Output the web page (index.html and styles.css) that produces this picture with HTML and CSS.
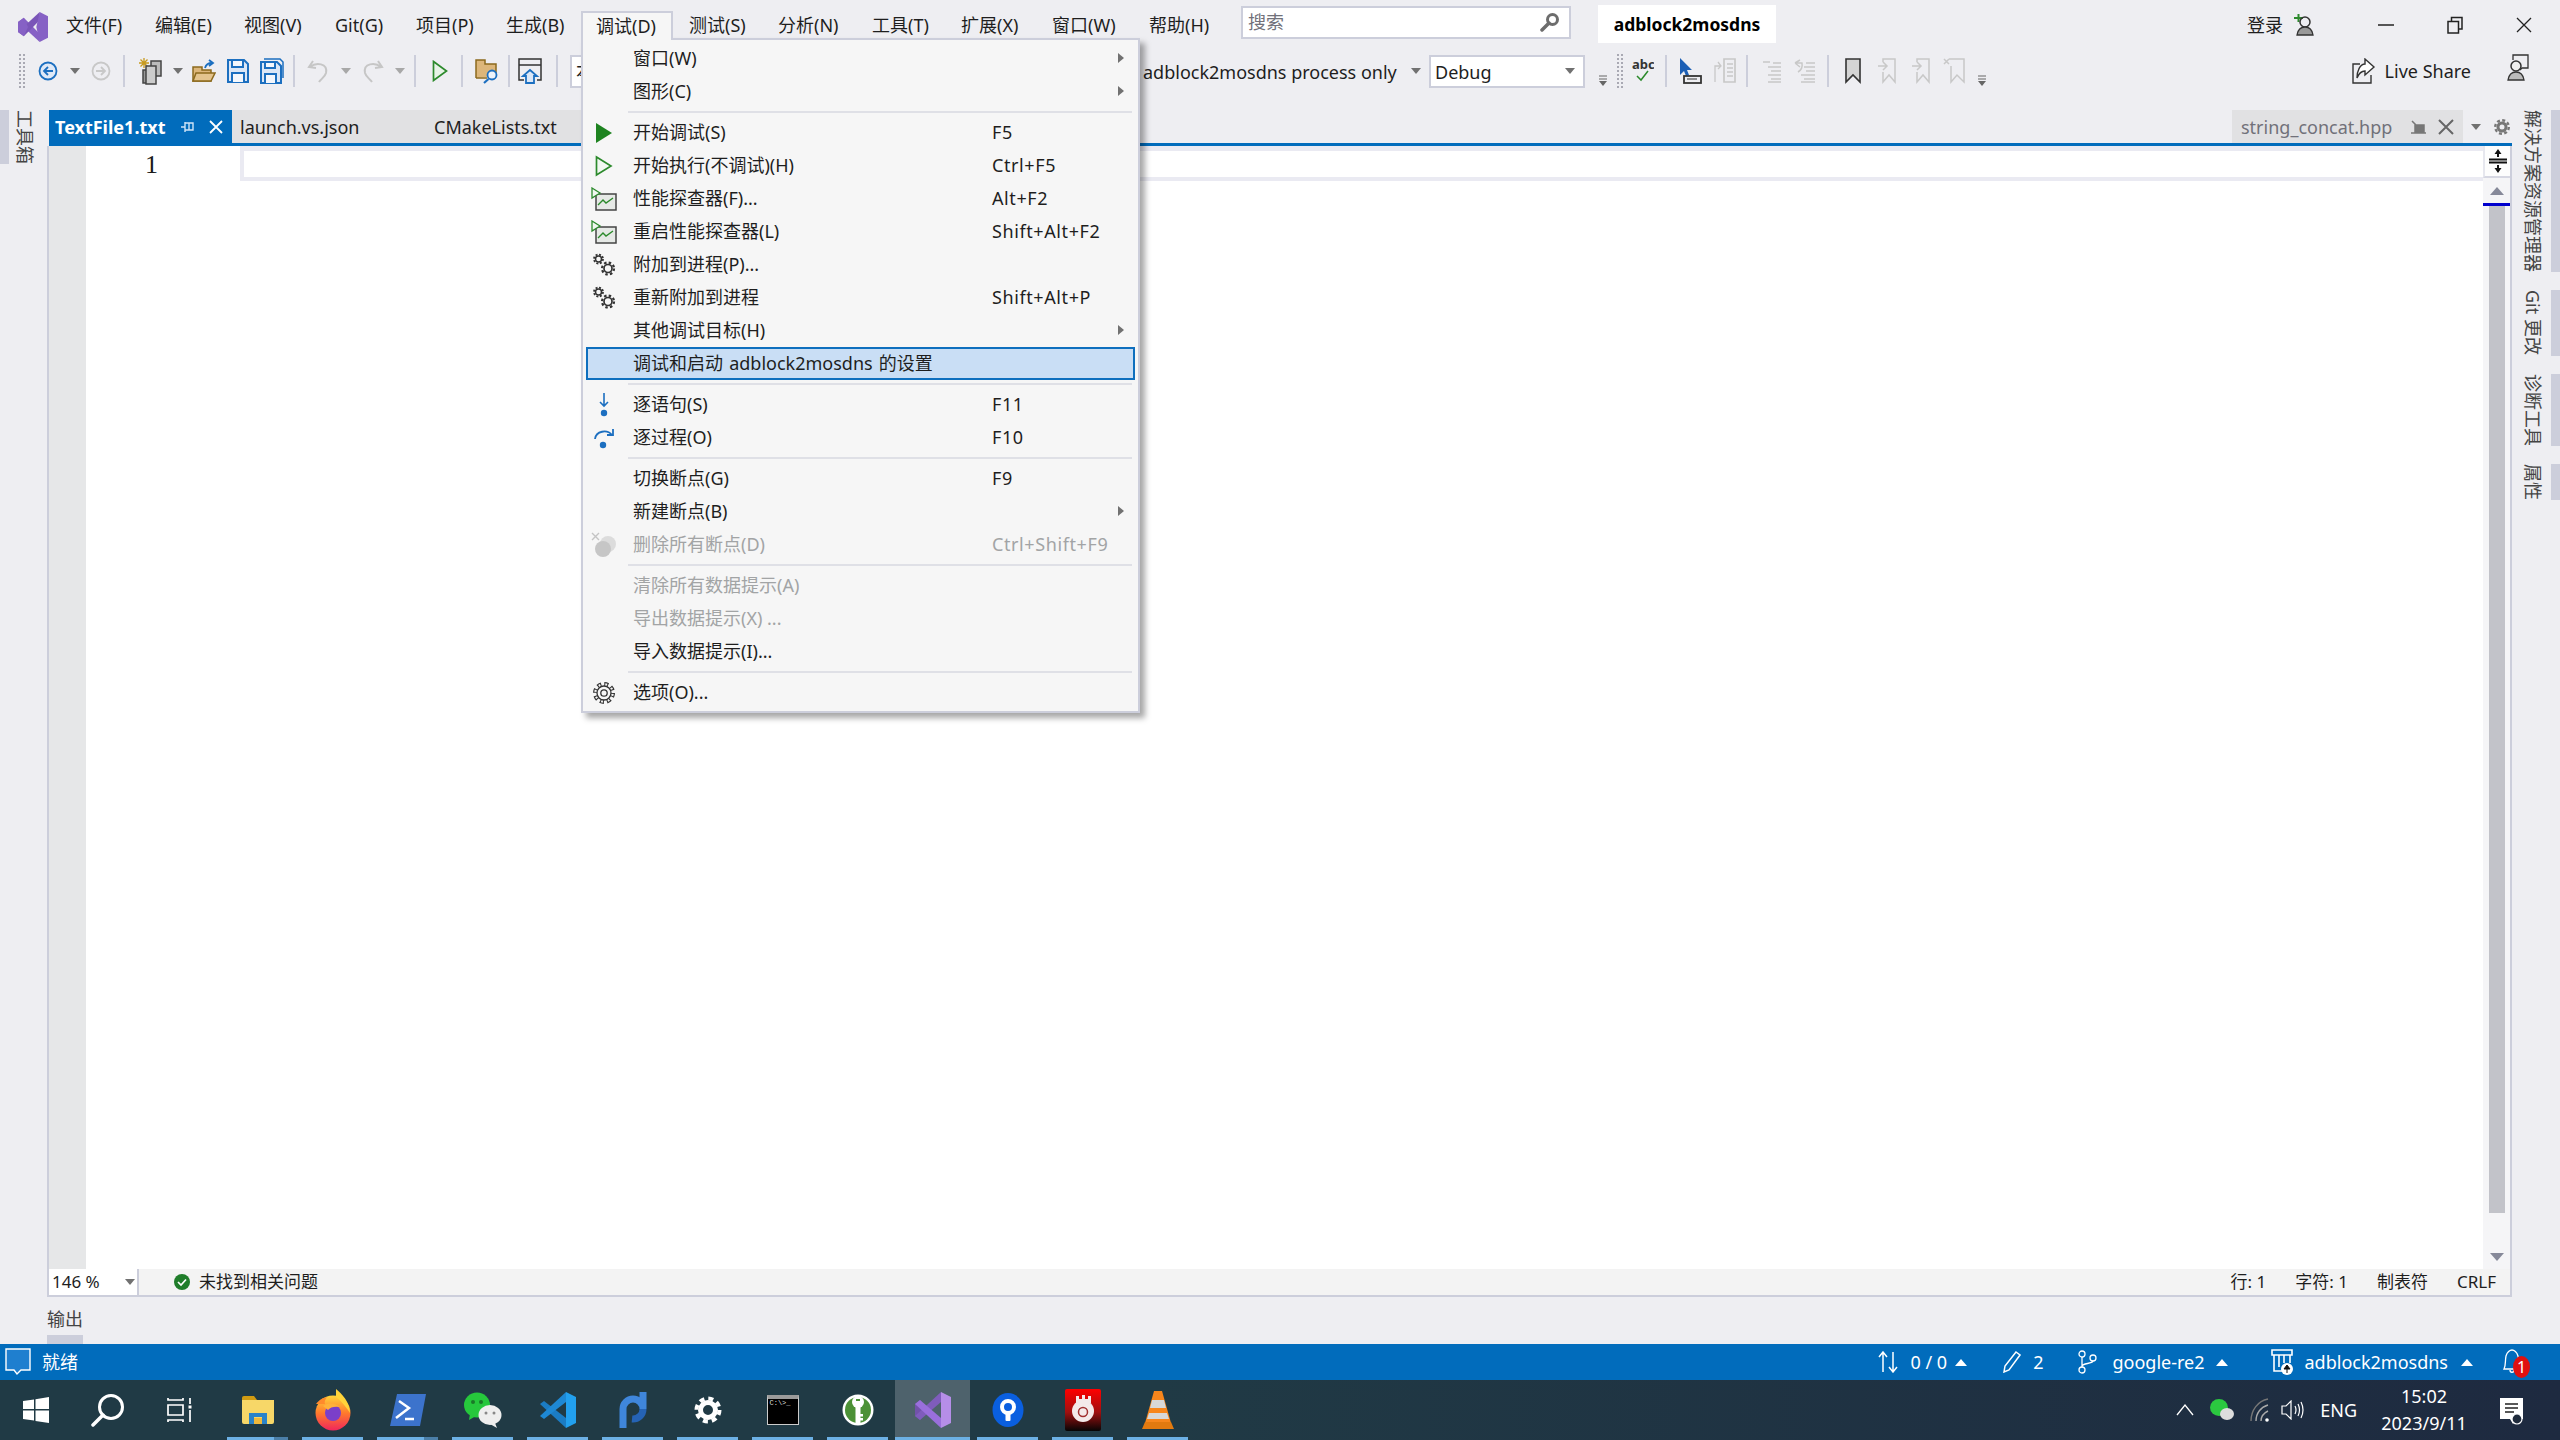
FILE: index.html
```html
<!DOCTYPE html>
<html lang="zh-CN">
<head>
<meta charset="utf-8">
<title>adblock2mosdns</title>
<link rel="stylesheet" href="styles.css">
</head>
<body>
<div class="app">
  <header class="titlebar">
    <svg class="logo" width="30" height="30" viewBox="0 0 36 36"><path d="M0 12 7 7 26 26V36Z" fill="#8661c5"/><path d="M0 24 7 29 26 10V0Z" fill="#7a55b8"/><path d="M0 12 7 7 12 18 7 29 0 24Z" fill="#8661c5"/><path d="M26 0 36 5V31L26 36 22 18Z" fill="#8661c5"/></svg>
    <nav class="menubar">
      <span class="mi mi-a">文件(F)</span><span class="mi mi-b">编辑(E)</span><span class="mi mi-c">视图(V)</span><span class="mi mi-d">Git(G)</span><span class="mi mi-e">项目(P)</span><span class="mi mi-f">生成(B)</span><span class="mi mi-open"></span><span class="mi mi-g">测试(S)</span><span class="mi mi-h">分析(N)</span><span class="mi mi-i">工具(T)</span><span class="mi mi-j">扩展(X)</span><span class="mi mi-k">窗口(W)</span><span class="mi mi-l">帮助(H)</span>
    </nav>
    <div class="search"><span>搜索</span>
      <svg width="20" height="20" viewBox="0 0 20 20"><circle cx="12.500" cy="7.500" r="5" fill="none" stroke="#6d6d6d" stroke-width="3"/><path d="M9 11 2 18" stroke="#6d6d6d" stroke-width="3.500" stroke-linecap="round"/></svg>
    </div>
    <div class="project">adblock2mosdns</div>
    <div class="account">
      <span class="login">登录</span>
      <svg width="20" height="24" viewBox="0 0 20 24"><path d="M0 5H9M4.500 1V9" stroke="#2d8a2d" stroke-width="2"/><circle cx="11" cy="9" r="5" fill="none" stroke="#333" stroke-width="1.500"/><path d="M3 22C4 16 7 14 11 14S18 16 19 22Z" fill="#999" stroke="#333" stroke-width="1.300"/></svg>
    </div>
    <div class="winbtns">
      <svg width="16" height="16" viewBox="0 0 16 16"><path d="M0 8H16" stroke="#222" stroke-width="1.500"/></svg>
      <svg width="16" height="18" viewBox="0 0 16 18"><path d="M1 5.500H11.500V17H1ZM4.500 5V1.500H15V13H12" fill="none" stroke="#222" stroke-width="1.500"/></svg>
      <svg width="16" height="16" viewBox="0 0 16 16"><path d="M1 1 15 15M15 1 1 15" stroke="#222" stroke-width="1.300"/></svg>
    </div>
  </header>

  <div class="toolbar">
    <div class="tb-left">
      <i class="grip"></i>
      <svg width="20" height="20" viewBox="0 0 20 20"><circle cx="10" cy="10" r="8.500" fill="#dfe9f7" stroke="#1c6fc0" stroke-width="1.800"/><path d="M15 10H6M10 6 6 10 10 14" fill="none" stroke="#1c6fc0" stroke-width="1.800"/></svg>
      <i class="drop"></i>
      <svg width="20" height="20" viewBox="0 0 20 20"><circle cx="10" cy="10" r="8.500" fill="none" stroke="#c8c8c8" stroke-width="1.800"/><path d="M5 10H14M10 6 14 10 10 14" fill="none" stroke="#c8c8c8" stroke-width="1.800"/></svg>
      <i class="sep"></i>
      <svg width="24" height="28" viewBox="0 0 24 28"><path d="M1 6H11M6 1V11M2.500 2.500 9.500 9.500M9.500 2.500 2.500 9.500" stroke="#c79a1e" stroke-width="1.300"/><rect x="13" y="4" width="10" height="15" fill="#bbb" stroke="#444" stroke-width="1.500"/><rect x="5" y="13" width="4" height="13" fill="#999" stroke="#444" stroke-width="1.500"/><rect x="8" y="9" width="10" height="18" fill="#ccc" stroke="#444" stroke-width="1.500"/></svg>
      <i class="drop"></i>
      <svg width="24" height="24" viewBox="0 0 24 24"><path d="M1 22V8H10V11H19V22Z" fill="#dcb67a" stroke="#8c6a1e" stroke-width="1.500"/><path d="M1 22 4 14H23L19 22Z" fill="#e4c48e" stroke="#8c6a1e" stroke-width="1.500"/><path d="M13 9C14 5 16 4 20 4M17 1 21 4 17 7" fill="none" stroke="#1c6fc0" stroke-width="1.800"/></svg>
      <svg width="22" height="24" viewBox="0 0 22 24"><path d="M1 1H17L21 5V23H1Z" fill="#dce7f6" stroke="#1c6fc0" stroke-width="2"/><path d="M5 1H16V8H5ZM5 23V14H17V23" fill="#f4f7fc" stroke="#1c6fc0" stroke-width="2"/></svg>
      <svg width="24" height="26" viewBox="0 0 24 26"><path d="M4 1H20L23 4V20" fill="none" stroke="#1c6fc0" stroke-width="1.500"/><path d="M1 4H17L21 8V25H1Z" fill="#dce7f6" stroke="#1c6fc0" stroke-width="2"/><path d="M5 4H15V10H5ZM5 25V16H16V25" fill="#f4f7fc" stroke="#1c6fc0" stroke-width="2"/></svg>
      <i class="sep"></i>
      <svg width="22" height="24" viewBox="0 0 22 24"><path d="M6 2 2 8 9 9M3 8C9 3 21 4 19 14 18 18 14 20 12 23" fill="none" stroke="#c6c6c6" stroke-width="2"/></svg>
      <i class="drop light"></i>
      <svg width="22" height="24" viewBox="0 0 22 24"><path d="M16 2 20 8 13 9M19 8C13 3 1 4 3 14 4 18 8 20 10 23" fill="none" stroke="#c6c6c6" stroke-width="2"/></svg>
      <i class="drop light"></i>
      <i class="sep"></i>
      <svg width="16" height="22" viewBox="0 0 16 22"><path d="M1.500 1.500 14.500 11 1.500 20.500Z" fill="#e7f3e7" stroke="#2c8a2c" stroke-width="1.700"/></svg>
      <i class="sep"></i>
      <svg width="24" height="26" viewBox="0 0 24 26"><path d="M1 20V2H10V6H21V18" fill="#dcb67a" stroke="#8c6a1e" stroke-width="1.500"/><path d="M1 20H12" stroke="#8c6a1e" stroke-width="1.500"/><circle cx="17" cy="17" r="4.500" fill="#eef4fb" stroke="#1c6fc0" stroke-width="1.800"/><path d="M13.500 21 9 25" stroke="#1c6fc0" stroke-width="2.200"/></svg>
      <i class="sep"></i>
      <svg width="24" height="26" viewBox="0 0 24 26"><path d="M6 22H1V1H23V22H19M1 7H23" fill="none" stroke="#333" stroke-width="1.500"/><path d="M12 12 5 18H8V25H16V18H19Z" fill="#dce7f6" stroke="#1c6fc0" stroke-width="1.800"/></svg>
      <i class="sep"></i>
      <div class="combo hidden-combo">本地</div>
    </div>
    <div class="tb-right">
      <span class="target">adblock2mosdns process only</span>
      <i class="drop"></i>
      <div class="combo debug"><span>Debug</span><i class="drop"></i></div>
      <svg class="overflow" width="10" height="12" viewBox="0 0 10 12"><path d="M1 1H9M1 4H9" stroke="#666"/><path d="M1 6H9L5 11Z" fill="#666"/></svg>
      <i class="grip"></i>
      <svg width="22" height="26" viewBox="0 0 22 26" class="abc"><text x="0" y="11">abc</text><path d="M5 18 9 22 16 13" fill="none" stroke="#2c8a2c" stroke-width="1.500"/></svg>
      <i class="sep"></i>
      <svg width="24" height="28" viewBox="0 0 24 28"><path d="M2 1V18L6 14 8 19 11 18 9 13H14Z" fill="#1c5fb5"/><rect x="6" y="19" width="17" height="7" fill="none" stroke="#333" stroke-width="1.800"/><path d="M9 22H19" stroke="#333"/></svg>
      <svg width="22" height="26" viewBox="0 0 22 26"><path d="M1 24V8H7M4 4 7 8 4 11" fill="none" stroke="#c8c8c8" stroke-width="1.300"/><path d="M10 1H21V24H10ZM13 6H19M13 10H19M13 14H19M13 18H19" fill="none" stroke="#c8c8c8" stroke-width="1.700"/></svg>
      <i class="sep"></i>
      <svg width="20" height="24" viewBox="0 0 20 24"><path d="M1 3H8M6 8H19M9 12H19M6 16H19M9 20H19M6 23H19M11 4H19" stroke="#c8c8c8" stroke-width="1.500"/></svg>
      <svg width="22" height="24" viewBox="0 0 22 24"><path d="M1 4 6 1M1 4 6 8M1 4H8Q9 10 4 13M12 4H21M10 8H21M12 12H21M7 16H21M10 20H21M7 23H21" fill="none" stroke="#c8c8c8" stroke-width="1.500"/></svg>
      <i class="sep"></i>
      <svg width="16" height="26" viewBox="0 0 16 26"><path d="M1 1H15V24L8 17 1 24Z" fill="#d4d4d4" stroke="#333" stroke-width="1.600"/></svg>
      <svg width="18" height="26" viewBox="0 0 18 26"><path d="M5 4V1H17V24L11 17 5 24V14M0 8H9M5 4 9 8 5 12" fill="none" stroke="#c8c8c8" stroke-width="1.500"/></svg>
      <svg width="18" height="26" viewBox="0 0 18 26"><path d="M5 4V1H17V24L11 17 5 24V14M0 8H9M5 4 9 8 5 12" fill="none" stroke="#c8c8c8" stroke-width="1.500"/></svg>
      <svg width="22" height="26" viewBox="0 0 22 26"><path d="M6 1H21V24L14 17 8 24V8M1 1 6 6M6 1 1 6" fill="none" stroke="#c8c8c8" stroke-width="1.500"/></svg>
      <svg class="overflow" width="10" height="12" viewBox="0 0 10 12"><path d="M1 1H9M1 4H9" stroke="#666"/><path d="M1 6H9L5 11Z" fill="#666"/></svg>
    </div>
    <div class="live">
      <svg width="24" height="26" viewBox="0 0 24 26"><path d="M8 6H1V25H19V17" fill="none" stroke="#333" stroke-width="1.400"/><path d="M13 1 22 9 13 17V13C9 13 7 15 5 20 5 13 8 6 13 6Z" fill="#fff" stroke="#333" stroke-width="1.400"/></svg>
      <span>Live Share</span>
      <svg class="live-user" width="22" height="28" viewBox="0 0 22 28"><path d="M6 6V1H21V14H15L13 16" fill="none" stroke="#333" stroke-width="1.300"/><circle cx="9" cy="12" r="5" fill="#eee" stroke="#333" stroke-width="1.500"/><path d="M1 26C2 20 5 18 9 18S16 20 17 26Z" fill="#bbb" stroke="#333" stroke-width="1.300"/></svg>
    </div>
  </div>

  <main class="workspace">
    <aside class="rail rail-left">
      <div class="rail-item"><i class="rail-strip"></i><span class="vtext">工具箱</span></div>
    </aside>
    <section class="doc">
      <div class="tabs">
        <div class="tab tab-active"><span>TextFile1.txt</span>
          <svg width="14" height="14" viewBox="0 0 14 14"><path d="M0 7H4M4 2V12M4 3H12V10H4M8 3V10" fill="none" stroke="#cfe4f7" stroke-width="1.400"/></svg>
          <svg width="14" height="14" viewBox="0 0 14 14"><path d="M1 1 13 13M13 1 1 13" stroke="#fff" stroke-width="1.800"/></svg>
        </div>
        <div class="tab tab-b">launch.vs.json</div>
        <div class="tab tab-c">CMakeLists.txt</div>
        <div class="tab-right">
          <span>string_concat.hpp</span>
          <svg width="16" height="14" viewBox="0 0 16 14"><path d="M0 13H15M4 5H13V12H4ZM1 1 6 6" fill="#777" stroke="#777" stroke-width="1.500"/></svg>
          <svg width="16" height="16" viewBox="0 0 16 16"><path d="M1 1 15 15M15 1 1 15" stroke="#666" stroke-width="2"/></svg>
        </div>
        <i class="drop tab-drop"></i>
        <svg class="tab-gear" width="16" height="16" viewBox="0 0 16 16"><circle cx="8" cy="8" r="4" fill="none" stroke="#777" stroke-width="3"/><circle cx="8" cy="8" r="6.800" fill="none" stroke="#777" stroke-width="2.400" stroke-dasharray="3 2.340"/></svg>
      </div>
      <div class="tabline"></div>
      <div class="editor">
        <div class="gutter"></div>
        <div class="code">
          <div class="codeline"><span class="lineno">1</span><div class="curline"></div></div>
        </div>
        <div class="vscroll">
          <div class="splitter"><svg width="20" height="24" viewBox="0 0 20 24"><path d="M1 10.500H19M1 13.500H19" stroke="#111" stroke-width="2"/><path d="M10 8V2M10 16V22" stroke="#111" stroke-width="2"/><path d="M6.500 5 10 0 13.500 5ZM6.500 19 10 24 13.500 19Z" fill="#111"/></svg></div>
          <div class="sb-up"><i class="tri-up"></i></div>
          <div class="sb-mark"></div>
          <div class="sb-track"><div class="sb-thumb"></div></div>
          <div class="sb-down"><i class="tri-down"></i></div>
        </div>
      </div>
      <div class="edstatus">
        <div class="zoomfield"><span>146 %</span><i class="drop"></i></div>
        <svg class="okicon" width="16" height="16" viewBox="0 0 16 16"><circle cx="8" cy="8" r="8" fill="#1f7d2a"/><path d="M4 8 7 11 12 5.500" fill="none" stroke="#fff" stroke-width="1.700"/></svg>
        <span class="noissue">未找到相关问题</span>
        <div class="edpos"><span>行: 1</span><span>字符: 1</span><span>制表符</span><span>CRLF</span></div>
      </div>
    </section>
    <aside class="rail rail-right">
      <div class="rail-item r1"><span class="vtext">解决方案资源管理器</span><i class="rail-strip"></i></div>
      <div class="rail-item r2"><span class="vtext">Git 更改</span><i class="rail-strip"></i></div>
      <div class="rail-item r3"><span class="vtext">诊断工具</span><i class="rail-strip"></i></div>
      <div class="rail-item r4"><span class="vtext">属性</span><i class="rail-strip"></i></div>
    </aside>
  </main>

  <div class="outputrow"><div class="outtab"><span>输出</span><i></i></div></div>

  <footer class="statusbar">
    <svg class="st-chat" width="26" height="28" viewBox="0 0 26 28"><path d="M1 1H25V22H16L12 26 9 22H1Z" fill="#1f7fcf" stroke="#fff" stroke-width="1.400"/></svg>
    <span class="st-ready">就绪</span>
    <div class="st-right">
      <svg width="20" height="22" viewBox="0 0 20 22"><path d="M5 21V2M1 6 5 1 9 6M15 1V20M11 16 15 21 19 16" fill="none" stroke="#fff" stroke-width="1.500"/></svg>
      <span class="st-count">0 / 0</span><i class="caret c1"></i>
      <svg class="st-pen" width="18" height="22" viewBox="0 0 18 22"><path d="M13 1 17 4 6 19 1 21 2 15Z" fill="none" stroke="#fff" stroke-width="1.500"/></svg>
      <span class="st-two">2</span>
      <svg class="st-branch" width="20" height="24" viewBox="0 0 20 24"><circle cx="5" cy="4" r="3" fill="none" stroke="#fff" stroke-width="1.300"/><circle cx="5" cy="20" r="3" fill="none" stroke="#fff" stroke-width="1.300"/><circle cx="16" cy="8" r="3" fill="none" stroke="#fff" stroke-width="1.300"/><path d="M5 7V17M5 16C6 13 15 14 16 11" fill="none" stroke="#fff" stroke-width="1.300"/></svg>
      <span class="st-branchname">google-re2</span><i class="caret c2"></i>
      <svg class="st-repo" width="22" height="26" viewBox="0 0 22 26"><path d="M1 1H21V6H1ZM3 6V22H11M19 6V14M8 6V18M13 6V14" fill="none" stroke="#fff" stroke-width="1.600"/><circle cx="16" cy="20" r="6" fill="#fff"/><path d="M16 24V18M13 20 16 16 19 20Z" fill="#111" stroke="#111"/></svg>
      <span class="st-proj">adblock2mosdns</span><i class="caret c3"></i>
      <div class="st-bell">
        <svg width="20" height="26" viewBox="0 0 20 26"><path d="M2 20C4 16 3 12 4 7 5 3 8 1 10 1S15 3 16 7 16 16 18 20ZM8 21C8 24 12 24 12 21" fill="none" stroke="#fff" stroke-width="1.300"/></svg>
        <span class="badge">1</span>
      </div>
    </div>
  </footer>

  <div class="taskbar">
    <div class="tb-app tb-start"><svg width="26" height="26" viewBox="0 0 26 26"><path d="M0 4 11 2.500V12H0ZM12.500 2.300 26 0V12H12.500ZM0 13.500H11V23.500L0 22ZM12.500 13.500H26V26L12.500 24Z" fill="#fff"/></svg></div>
    <div class="tb-app tb-start"><svg width="34" height="34" viewBox="0 0 34 34"><circle cx="20" cy="14" r="11.500" fill="none" stroke="#fff" stroke-width="3"/><path d="M12 22 2 32" stroke="#fff" stroke-width="3.500" stroke-linecap="round"/></svg></div>
    <div class="tb-app tb-start tb-view"><svg width="26" height="26" viewBox="0 0 26 26"><path d="M1 1V3H16V1M1 8H16V18H1ZM1 25V23H16V25" fill="none" stroke="#fff" stroke-width="1.700"/><path d="M23 1V7M23 13V25" stroke="#fff" stroke-width="1.700"/><rect x="21.500" y="8.500" width="3" height="3" fill="#fff"/></svg></div>

    <div class="tb-app run multi"><svg width="32" height="28" viewBox="0 0 32 28"><path d="M0 2Q0 0 2 0H12L15 4H0Z" fill="#d09b12"/><path d="M0 4H32V26Q32 28 30 28H2Q0 28 0 26Z" fill="#f7d768"/><path d="M7 28V17H25V28H20V21H12V28Z" fill="#2a83c9"/><rect x="12" y="22" width="8" height="6" fill="#f0b93c"/></svg></div>
    <div class="tb-app run"><svg width="36" height="42" viewBox="0 0 36 42"><defs><linearGradient id="ffg" x1="0" y1="0" x2="0" y2="1"><stop offset="0" stop-color="#ffd43a"/><stop offset=".5" stop-color="#ff7a2c"/><stop offset="1" stop-color="#f0265c"/></linearGradient></defs><circle cx="18" cy="24" r="17.500" fill="url(#ffg)"/><path d="M21 0C27 5 35 13 35 24 30 16 24 10 21 8Z" fill="#ffd43a"/><path d="M1 15C5 10 8 9 12 8 10 11 9 13 10 15Z" fill="#ff8a2c"/><circle cx="18" cy="24" r="8" fill="#7b3fc9"/><path d="M8 17C13 13 20 14 25 18 20 17 15 18 13 21Z" fill="#ffb13a"/></svg></div>
    <div class="tb-app run multi"><svg width="36" height="32" viewBox="0 0 36 32"><path d="M7 0H36L30 32H0Z" fill="#3c73cc"/><path d="M9 7 19 14 6 24M15 25H24" fill="none" stroke="#fff" stroke-width="2.500"/></svg></div>
    <div class="tb-app run"><svg width="38" height="36" viewBox="0 0 38 36"><ellipse cx="13" cy="13" rx="13" ry="12.500" fill="#26c83c"/><path d="M6 22 5 28 12 24Z" fill="#26c83c"/><circle cx="9" cy="10" r="2" fill="#1a7a28"/><circle cx="17" cy="10" r="2" fill="#1a7a28"/><ellipse cx="26" cy="23" rx="11.500" ry="10" fill="#eee"/><path d="M31 31 33 36 26 32Z" fill="#eee"/><circle cx="22" cy="21" r="1.500" fill="#888"/><circle cx="30" cy="21" r="1.500" fill="#888"/></svg></div>
    <div class="tb-app run"><svg width="36" height="36" viewBox="0 0 36 36"><path d="M0 12 4 9 26 26V36Z" fill="#1b7cc4"/><path d="M0 24 4 27 26 10V0Z" fill="#1e88d4"/><path d="M26 0 36 5V31L26 36Z" fill="#22a0ee"/></svg></div>
    <div class="tb-app run"><svg width="28" height="36" viewBox="0 0 28 36"><path d="M4 36V17A10 10 0 0 1 24 17V0" fill="none" stroke="#3f86db" stroke-width="7"/><path d="M24 17A10 10 0 0 1 13 27" fill="none" stroke="#2563b5" stroke-width="7"/></svg></div>
    <div class="tb-app run"><svg width="28" height="28" viewBox="0 0 28 28"><circle cx="14" cy="14" r="7.500" fill="none" stroke="#fff" stroke-width="5"/><circle cx="14" cy="14" r="11.500" fill="none" stroke="#fff" stroke-width="4" stroke-dasharray="5 4.030"/></svg></div>
    <div class="tb-app run"><div class="cmdicon"><span>C:\&gt;_</span></div></div>
    <div class="tb-app run"><svg width="32" height="32" viewBox="0 0 32 32"><circle cx="16" cy="16" r="15.500" fill="#fff"/><circle cx="16" cy="16" r="13" fill="#4c9136"/><circle cx="16" cy="8" r="6" fill="#fff"/><rect x="13.500" y="11" width="5" height="19" fill="#fff"/><rect x="18" y="20" width="3" height="2.500" fill="#fff"/><rect x="18" y="24" width="3" height="2.500" fill="#fff"/><rect x="14" y="5" width="4" height="2" fill="#4c9136"/></svg></div>
    <div class="tb-app run active"><svg width="36" height="36" viewBox="0 0 36 36"><path d="M0 12 5 8 12 18 5 28 0 24Z" fill="#7252aa"/><path d="M0 24 5 28 26 10V0Z" fill="#7f5cbc"/><path d="M5 8 26 26V36L0 12Z" fill="#9a6fdc"/><path d="M26 0 36 5V31L26 36Z" fill="#b68ee8"/></svg></div>
    <div class="tb-app run"><svg width="32" height="34" viewBox="0 0 32 34"><ellipse cx="16" cy="17" rx="15.500" ry="17" fill="#0a5fe0"/><circle cx="16" cy="14" r="6" fill="none" stroke="#fff" stroke-width="4"/><rect x="13.500" y="18" width="5" height="10" rx="1" fill="#fff"/></svg></div>
    <div class="tb-app run"><svg width="36" height="42" viewBox="0 0 36 42"><defs><linearGradient id="redg" x1="0" y1="0" x2="0" y2="1"><stop offset="0" stop-color="#f00"/><stop offset=".55" stop-color="#a01010"/><stop offset="1" stop-color="#050505"/></linearGradient></defs><rect width="36" height="42" rx="2" fill="url(#redg)"/><circle cx="18" cy="22" r="11" fill="#f4eaea"/><path d="M11 14V7H14V10H17V6H20V10H23V7H26V14Z" fill="#f4eaea"/><circle cx="18" cy="23" r="4.500" fill="none" stroke="#a03030" stroke-width="1.500"/></svg></div>
    <div class="tb-app run"><svg width="32" height="38" viewBox="0 0 32 38"><path d="M12 0H20L29 32H3Z" fill="#f7861c"/><path d="M10 9H22L24 17H8ZM7 22H25L27 28H5Z" fill="#d8d8d8"/><path d="M0 38 3 31H29L32 38Z" fill="#e27a10"/></svg></div>

    <div class="tray">
      <svg width="18" height="12" viewBox="0 0 18 12"><path d="M1 11 9 1 17 11" fill="none" stroke="#fff" stroke-width="1.300"/></svg>
      <svg class="tr-wechat" width="24" height="22" viewBox="0 0 24 22"><ellipse cx="9" cy="8.500" rx="9" ry="8.500" fill="#2bc840"/><ellipse cx="17" cy="15" rx="7" ry="6" fill="#ddd"/></svg>
      <svg class="tr-wifi" width="20" height="24" viewBox="0 0 20 24"><path d="M1 23C1 12 8 3 18 1" fill="none" stroke="#777" stroke-width="1.400"/><path d="M6 23C6 15 11 9 18 7M11 23C11 18 14 15 18 13" fill="none" stroke="#aaa" stroke-width="1.400"/><circle cx="17" cy="22" r="1.800" fill="#fff"/></svg>
      <svg class="tr-vol" width="24" height="20" viewBox="0 0 24 20"><path d="M1 6H5L10 1V19L5 14H1Z" fill="none" stroke="#fff" stroke-width="1.200"/><path d="M14 6Q16 10 14 14M17 4Q20 10 17 16M20 2Q24 10 20 18" fill="none" stroke="#fff" stroke-width="1.200"/></svg>
      <span class="tr-eng">ENG</span>
      <div class="clock"><span>15:02</span><span>2023/9/11</span></div>
      <svg class="tr-note" width="26" height="30" viewBox="0 0 26 30"><path d="M1 1H24V22H18L14 27 11 22H1Z" fill="#fff"/><path d="M6 7H19M6 11H19M6 15H15" stroke="#222" stroke-width="1.300"/><circle cx="18" cy="22" r="5" fill="#1f2b3c" stroke="#fff" stroke-width="1.200"/></svg>
    </div>
  </div>

  <div class="dbg-head">调试(D)</div>
  <div class="menu">
    <div class="row"><span class="ic"></span><span class="lb">窗口(W)</span><i class="sub"></i></div>
    <div class="row"><span class="ic"></span><span class="lb">图形(C)</span><i class="sub"></i></div>
    <div class="msep"></div>
    <div class="row"><span class="ic"><svg width="18" height="22" viewBox="0 0 18 22"><path d="M1 1 17 11 1 21Z" fill="#1e8320"/></svg></span><span class="lb">开始调试(S)</span><span class="sc">F5</span></div>
    <div class="row"><span class="ic"><svg width="18" height="22" viewBox="0 0 18 22"><path d="M1.500 2 16 11 1.500 20Z" fill="#f1f8f1" stroke="#2c8a2c" stroke-width="1.700"/></svg></span><span class="lb">开始执行(不调试)(H)</span><span class="sc">Ctrl+F5</span></div>
    <div class="row"><span class="ic"><svg width="26" height="24" viewBox="0 0 26 24"><rect x="5" y="7" width="20" height="16" fill="#e6e9e6" stroke="#444" stroke-width="1.500"/><path d="M7 18 12 13 15 16 22 11" fill="none" stroke="#2c8a2c" stroke-width="1.400"/><path d="M1 1 9 6 1 11Z" fill="#f1f8f1" stroke="#2c8a2c" stroke-width="1.300"/></svg></span><span class="lb">性能探查器(F)...</span><span class="sc">Alt+F2</span></div>
    <div class="row"><span class="ic"><svg width="26" height="24" viewBox="0 0 26 24"><rect x="5" y="7" width="20" height="16" fill="#e6e9e6" stroke="#444" stroke-width="1.500"/><path d="M7 18 12 13 15 16 22 11" fill="none" stroke="#2c8a2c" stroke-width="1.400"/><path d="M1 1 9 6 1 11Z" fill="#f1f8f1" stroke="#2c8a2c" stroke-width="1.300"/></svg></span><span class="lb">重启性能探查器(L)</span><span class="sc">Shift+Alt+F2</span></div>
    <div class="row"><span class="ic"><svg width="24" height="24" viewBox="0 0 24 24"><circle cx="6.500" cy="6" r="3" fill="none" stroke="#333" stroke-width="1.500"/><circle cx="6.500" cy="6" r="4.500" fill="none" stroke="#333" stroke-width="1.800" stroke-dasharray="2 1.530"/><circle cx="16" cy="15.500" r="4" fill="none" stroke="#333" stroke-width="1.700"/><circle cx="16" cy="15.500" r="6" fill="none" stroke="#333" stroke-width="2.200" stroke-dasharray="2.500 2.210"/></svg></span><span class="lb">附加到进程(P)...</span></div>
    <div class="row"><span class="ic"><svg width="24" height="24" viewBox="0 0 24 24"><circle cx="6.500" cy="6" r="3" fill="none" stroke="#333" stroke-width="1.500"/><circle cx="6.500" cy="6" r="4.500" fill="none" stroke="#333" stroke-width="1.800" stroke-dasharray="2 1.530"/><circle cx="16" cy="15.500" r="4" fill="none" stroke="#333" stroke-width="1.700"/><circle cx="16" cy="15.500" r="6" fill="none" stroke="#333" stroke-width="2.200" stroke-dasharray="2.500 2.210"/></svg></span><span class="lb">重新附加到进程</span><span class="sc">Shift+Alt+P</span></div>
    <div class="row"><span class="ic"></span><span class="lb">其他调试目标(H)</span><i class="sub"></i></div>
    <div class="row row-hl"><span class="ic"></span><span class="lb">调试和启动 adblock2mosdns 的设置</span></div>
    <div class="msep"></div>
    <div class="row"><span class="ic"><svg width="14" height="24" viewBox="0 0 14 24"><path d="M7 0V13M3 9 7 13 11 9" fill="none" stroke="#1c6fc0" stroke-width="1.600"/><circle cx="7" cy="20" r="3.200" fill="#1c6fc0"/></svg></span><span class="lb">逐语句(S)</span><span class="sc">F11</span></div>
    <div class="row"><span class="ic"><svg width="22" height="24" viewBox="0 0 22 24"><path d="M2 13C3 5 14 3 19 9M14 9H20V3" fill="none" stroke="#1c6fc0" stroke-width="1.800"/><circle cx="10" cy="19" r="3.200" fill="#1c6fc0"/></svg></span><span class="lb">逐过程(O)</span><span class="sc">F10</span></div>
    <div class="msep"></div>
    <div class="row"><span class="ic"></span><span class="lb">切换断点(G)</span><span class="sc">F9</span></div>
    <div class="row"><span class="ic"></span><span class="lb">新建断点(B)</span><i class="sub"></i></div>
    <div class="row row-dis"><span class="ic"><svg width="26" height="26" viewBox="0 0 26 26"><path d="M1 1 8 8M8 1 1 8" stroke="#c4c4c4" stroke-width="1.400"/><circle cx="17" cy="12" r="8" fill="#dcdcdc"/><circle cx="12" cy="17" r="8" fill="#c6c6c6"/></svg></span><span class="lb">删除所有断点(D)</span><span class="sc">Ctrl+Shift+F9</span></div>
    <div class="msep"></div>
    <div class="row row-dis"><span class="ic"></span><span class="lb">清除所有数据提示(A)</span></div>
    <div class="row row-dis"><span class="ic"></span><span class="lb">导出数据提示(X) ...</span></div>
    <div class="row"><span class="ic"></span><span class="lb">导入数据提示(I)...</span></div>
    <div class="msep"></div>
    <div class="row"><span class="ic"><svg width="22" height="22" viewBox="0 0 22 22"><circle cx="11" cy="11" r="8.500" fill="none" stroke="#333" stroke-width="5" stroke-dasharray="3.800 2.880"/><circle cx="11" cy="11" r="8.500" fill="none" stroke="#f6f6f6" stroke-width="2.600" stroke-dasharray="1.800 4.880" stroke-dashoffset="-1"/><circle cx="11" cy="11" r="7" fill="#f6f6f6" stroke="#333" stroke-width="1.300"/><circle cx="11" cy="11" r="3.200" fill="none" stroke="#333" stroke-width="1.300"/></svg></span><span class="lb">选项(O)...</span></div>
  </div>
</div>
</body>
</html>
```

FILE: styles.css
```css
* { box-sizing: border-box; }
html, body { margin: 0; height: 100%; }
body { font-family: "Noto Sans", "Noto Sans CJK SC", sans-serif; font-size: 18px; line-height: 24px; color: #1e1e1e; background: #eeeef2; overflow: hidden; }
i { display: block; font-style: normal; }
svg { display: block; flex: none; }

.app { position: relative; width: 2560px; height: 1440px; display: flex; flex-direction: column; overflow: hidden; }

/* title row */
.titlebar { height: 46px; flex: none; display: flex; align-items: center; padding-top: 4px; }
.logo { margin-left: 18px; margin-top: 4px; }
.menubar { display: flex; margin-left: 18px; width: 1193px; flex: none; }
.mi { display: block; flex: none; white-space: nowrap; }
.mi-a { width: 89px; } .mi-b { width: 89px; } .mi-c { width: 91px; } .mi-d { width: 81px; }
.mi-e { width: 90px; } .mi-f { width: 90px; } .mi-open { width: 93px; }
.mi-g { width: 89px; } .mi-h { width: 94px; } .mi-i { width: 89px; } .mi-j { width: 91px; } .mi-k { width: 97px; } .mi-l { width: 80px; }
.search { width: 330px; height: 33px; margin-top: -6px; margin-left: -18px; background: #fff; border: 2px solid #cccedb; display: flex; align-items: center; justify-content: space-between; padding: 0 9px 0 5px; color: #71717a; flex: none; }
.project { width: 178px; height: 38px; margin-top: -2px; margin-left: 27px; background: #fff; font-weight: 700; font-size: 17.500px; display: flex; align-items: center; justify-content: center; color: #000; flex: none; }
.account { display: flex; align-items: center; margin-left: 471px; gap: 11px; flex: none; }
.winbtns { display: flex; align-items: center; gap: 53px; margin-left: 64px; flex: none; }

/* toolbar */
.toolbar { height: 50px; flex: none; display: flex; align-items: center; }
.tb-left { width: 1143px; flex: none; padding-left: 14px; display: grid; align-items: center; justify-items: center; grid-template-columns: 16px 36px 18px 34px 12px 40px 16px 36px 32px 36px 8px 40px 16px 38px 16px 14px 36px 8px 42px 2px 40px 14px auto; }
.tb-right { display: grid; align-items: center; justify-items: center; grid-template-columns: 262px 22px 164px 24px 10px 36px 10px 38px 32px 12px 38px 28px 18px 32px 36px 32px 34px 22px; }
.grip { width: 8px; height: 36px; background-image: radial-gradient(#a9a9b3 1px, transparent 1.200px); background-size: 4px 4px; }
.sep { width: 2px; height: 32px; background: #cccedb; }
.drop { width: 0; height: 0; border-left: 5px solid transparent; border-right: 5px solid transparent; border-top: 6px solid #717171; }
.drop.light { border-top-color: #a8a8a8; }
.combo { height: 33px; background: #fff; border: 2px solid #cccedb; display: flex; align-items: center; }
.hidden-combo { width: 200px; justify-self: start; margin-left: 6px; padding-left: 4px; }
.target { justify-self: start; white-space: nowrap; margin-top: 2px; }
.debug { width: 156px; justify-self: start; margin-left: 2px; padding: 0 8px 0 4px; justify-content: space-between; }
.debug span { margin-top: 2px; }
.overflow { margin-top: 20px; }
.abc text { font: 700 13px "Noto Sans", sans-serif; fill: #333; }
.live { margin-left: auto; display: flex; align-items: center; padding-right: 31px; }
.live span { margin-left: 9px; }
.live-user { margin-left: 36px; margin-top: -6px; }

/* workspace */
.workspace { flex: 1; min-height: 0; margin-top: 14px; display: flex; }
.rail { width: 47px; flex: none; }
.rail-left { display: flex; flex-direction: column; }
.rail-item { display: flex; }
.rail-strip { width: 9px; background: #cccedb; flex: none; }
.vtext { writing-mode: vertical-rl; text-orientation: sideways; color: #444; line-height: 24px; white-space: nowrap; }
.rail-left .vtext { margin-left: 4px; }
.rail-right { width: 48px; display: flex; flex-direction: column; }
.rail-right .rail-item { justify-content: space-between; padding-left: 9px; }
.rail-right .vtext { width: 24px; flex: none; }
.r1 { height: 162px; } .r2 { height: 66px; margin-top: 18px; } .r3 { height: 72px; margin-top: 18px; } .r4 { height: 36px; margin-top: 18px; }

.doc { flex: 1; min-width: 0; display: flex; flex-direction: column; }
.tabs { height: 33px; flex: none; display: flex; align-items: center; padding-left: 2px; }
.tab { height: 33px; display: flex; align-items: center; flex: none; white-space: nowrap; background: #e1e1e3; }
.tab-active { width: 183px; background: #016cbc; color: #fff; font-weight: 700; padding-left: 6px; }
.tab-active span { width: 126px; }
.tab-active svg:last-child { margin-left: 14px; }
.tab-b { width: 202px; padding-left: 8px; }
.tab-c { width: 220px; }
.tab-right { margin-left: auto; width: 231px; height: 33px; background: #e1e1e3; display: flex; align-items: center; color: #71717a; padding-left: 9px; flex: none; white-space: nowrap; }
.tab-right span { width: 170px; }
.tab-right svg:last-child { margin-left: 11px; }
.tab-drop { margin-left: 8px; }
.tab-gear { margin-left: 13px; margin-right: 2px; }
.tabline { height: 3px; background: #016cbc; flex: none; margin-left: 2px; }

.editor { flex: 1; min-height: 0; display: flex; background: #fff; border-left: 2px solid #cccedb; border-right: 2px solid #cccedb; }
.gutter { width: 37px; background: #e6e7e8; flex: none; }
.code { flex: 1; min-width: 0; }
.codeline { display: flex; height: 35px; }
.lineno { width: 154px; flex: none; padding-left: 59px; font: 26px/38px "Liberation Serif", serif; color: #1a1a1a; }
.curline { flex: 1; border: solid #eaeaf2; border-width: 5px 0 4px 4px; background: #fff; }
.vscroll { width: 27px; flex: none; background: #f5f5f7; display: flex; flex-direction: column; }
.splitter { height: 32px; flex: none; background: #fdfdfd; border-left: 2px solid #e6e7ee; border-bottom: 2px solid #d6d7e2; display: flex; align-items: center; justify-content: center; }
.sb-up { height: 25px; flex: none; display: flex; align-items: center; justify-content: center; }
.tri-up { width: 0; height: 0; border-left: 7px solid transparent; border-right: 7px solid transparent; border-bottom: 8px solid #868999; }
.tri-down { width: 0; height: 0; border-left: 7px solid transparent; border-right: 7px solid transparent; border-top: 8px solid #868999; }
.sb-mark { height: 3px; flex: none; background: #0000cd; }
.sb-track { flex: 1; min-height: 0; display: flex; justify-content: center; }
.sb-thumb { width: 16px; height: 1007px; background: #c2c3c9; }
.sb-down { height: 24px; flex: none; display: flex; align-items: center; justify-content: center; padding-top: 0; }

.edstatus { height: 28px; flex: none; display: flex; align-items: center; background: #f3f3f3; border: solid #cccedb; border-width: 0 2px 2px 2px; font-size: 17px; }
.zoomfield { width: 90px; height: 26px; background: #fff; border-right: 2px solid #cccedb; display: flex; align-items: center; justify-content: space-between; padding: 0 2px 0 3px; flex: none; }
.okicon { margin-left: 35px; }
.noissue { margin-left: 9px; }
.edpos { margin-left: auto; display: flex; gap: 29px; padding-right: 14px; }

.outputrow { height: 47px; flex: none; padding-left: 47px; display: flex; align-items: flex-end; }
.outtab { width: 36px; color: #444; }
.outtab span { display: block; white-space: nowrap; line-height: 24px; margin-bottom: 4px; }
.outtab i { height: 9px; background: #cccedb; }

/* status bar */
.statusbar { height: 36px; flex: none; background: #016cbc; color: #fff; display: flex; align-items: center; }
.st-chat { margin-left: 5px; }
.st-ready { margin-left: 11px; }
.st-right { margin-left: auto; display: flex; align-items: center; padding-right: 38px; }
.st-count { margin-left: 13px; }
.caret { width: 0; height: 0; border-left: 6px solid transparent; border-right: 6px solid transparent; border-bottom: 7px solid #fff; }
.c1 { margin-left: 8px; } .c2 { margin-left: 11px; } .c3 { margin-left: 13px; }
.st-pen { margin-left: 36px; }
.st-two { margin-left: 12px; }
.st-branch { margin-left: 34px; }
.st-branchname { margin-left: 15px; }
.st-repo { margin-left: 43px; }
.st-proj { margin-left: 12px; }
.st-bell { position: relative; margin-left: 29px; }
.badge { position: absolute; left: 11px; top: 7px; width: 17px; height: 22px; border-radius: 50%; background: #e01010; font-size: 16px; line-height: 22px; text-align: center; }

/* taskbar */
.taskbar { height: 60px; flex: none; background: linear-gradient(90deg, #203a45 0%, #203a45 45%, #1e2a40 100%); display: flex; color: #fff; }
.tb-app { height: 60px; width: 75px; flex: none; display: flex; align-items: center; justify-content: center; position: relative; }
.tb-start { width: 72px; }
.tb-view { width: 72px; margin-right: 4px; }
.run::after { content: ""; position: absolute; left: 7px; right: 7px; bottom: 0; height: 3px; background: #6cb0e4; }
.multi::after { background: linear-gradient(90deg, #6cb0e4 77%, #4b7fa8 77%); }
.active { background: #4e626c; }
.active::after { left: 0; right: 0; }
.cmdicon { width: 32px; height: 30px; background: #000; border: 1px solid #ccc; border-top: 4px solid #9a9a9a; overflow: hidden; color: #ddd; font: 7px/9px "Liberation Mono", monospace; padding-left: 2px; }
.cmdicon span { display: block; }
.tray { margin-left: auto; display: flex; align-items: center; padding-right: 0; }
.tr-wechat { margin-left: 16px; }
.tr-wifi { margin-left: 16px; }
.tr-vol { margin-left: 11px; }
.tr-eng { margin-left: 15px; }
.clock { margin-left: 3px; width: 128px; display: flex; flex-direction: column; align-items: center; line-height: 27px; }
.tr-note { margin-left: 11px; margin-right: 35px; margin-top: 4px; }

/* open menu */
.dbg-head { position: absolute; left: 581px; top: 11px; width: 92px; height: 29px; background: #f6f6f6; border: 2px solid #cccedb; border-bottom: 0; padding: 1px 0 0 13px; z-index: 3; white-space: nowrap; }
.menu { position: absolute; left: 581px; top: 38px; width: 559px; height: 675px; background: #f6f6f6; border: 2px solid #cccedb; padding: 2px 2px 0; box-shadow: 5px 5px 6px rgba(0,0,0,.35); z-index: 2; }
.row { position: relative; height: 33px; display: flex; align-items: center; white-space: nowrap; }
.ic { width: 38px; margin-right: 10px; flex: none; display: flex; align-items: center; justify-content: center; }
.lb { width: 359px; flex: none; margin-top: -2px; }
.sc { flex: none; margin-top: -2px; letter-spacing: .6px; }
.sub { position: absolute; right: 12px; top: 11px; width: 0; height: 0; border-top: 5px solid transparent; border-bottom: 5px solid transparent; border-left: 6px solid #717171; }
.row-hl { background: #c9def5; border: 2px solid #0e6fbe; margin: 0 1px; }
.row-hl .ic { width: 35px; }
.row-hl .lb { word-spacing: 1.500px; }
.row-dis { color: #a2a4a5; }
.msep { height: 8px; position: relative; }
.msep::after { content: ""; position: absolute; left: 43px; right: 4px; top: 3px; height: 2px; background: #dfe0e6; }
```
